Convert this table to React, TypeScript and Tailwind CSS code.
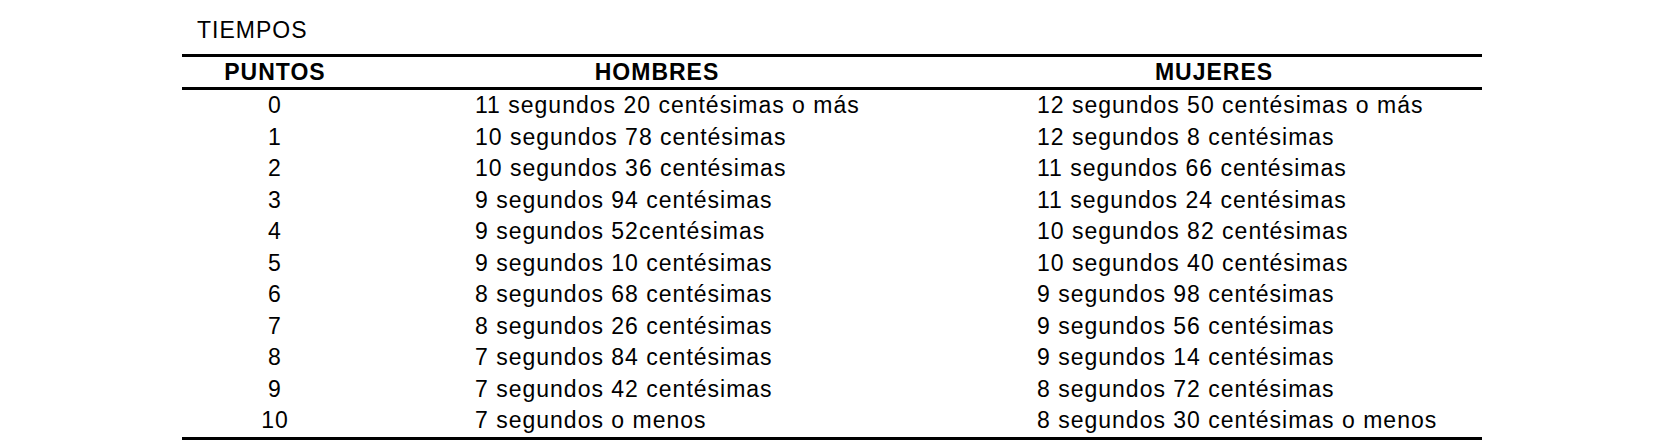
const rows = [
  { pts: "0", men: "11 segundos 20 centésimas o más", women: "12 segundos 50 centésimas o más" },
  { pts: "1", men: "10 segundos 78 centésimas", women: "12 segundos 8 centésimas" },
  { pts: "2", men: "10 segundos 36 centésimas", women: "11 segundos 66 centésimas" },
  { pts: "3", men: "9 segundos 94 centésimas", women: "11 segundos 24 centésimas" },
  { pts: "4", men: "9 segundos 52centésimas", women: "10 segundos 82 centésimas" },
  { pts: "5", men: "9 segundos 10 centésimas", women: "10 segundos 40 centésimas" },
  { pts: "6", men: "8 segundos 68 centésimas", women: "9 segundos 98 centésimas" },
  { pts: "7", men: "8 segundos 26 centésimas", women: "9 segundos 56 centésimas" },
  { pts: "8", men: "7 segundos 84 centésimas", women: "9 segundos 14 centésimas" },
  { pts: "9", men: "7 segundos 42 centésimas", women: "8 segundos 72 centésimas" },
  { pts: "10", men: "7 segundos o menos", women: "8 segundos 30 centésimas o menos" }
];

export default function App() {
  return (
    <div className="h-[448px] w-[1668px] bg-white pl-[182px] pt-[15px] font-['Liberation_Sans',Arial,sans-serif] text-[23px] tracking-[1px] text-black">
      <p className="ml-[15px] leading-[31px]">TIEMPOS</p>

      <div className="mt-[8px] w-[1300px] border-y-[3px] border-black">
        <div className="grid grid-cols-[186px_578px_536px] border-b-[3px] border-black font-bold leading-[30px]">
          <div className="text-center">PUNTOS</div>
          <div className="text-center">HOMBRES</div>
          <div className="text-center">MUJERES</div>
        </div>

        {rows.map((row) => (
          <div key={row.pts} className="grid grid-cols-[186px_578px_536px] leading-[31.5px]">
            <div className="text-center">{row.pts}</div>
            <div className="pl-[107px] whitespace-nowrap">{row.men}</div>
            <div className="pl-[91px] whitespace-nowrap">{row.women}</div>
          </div>
        ))}
      </div>
    </div>
  );
}
